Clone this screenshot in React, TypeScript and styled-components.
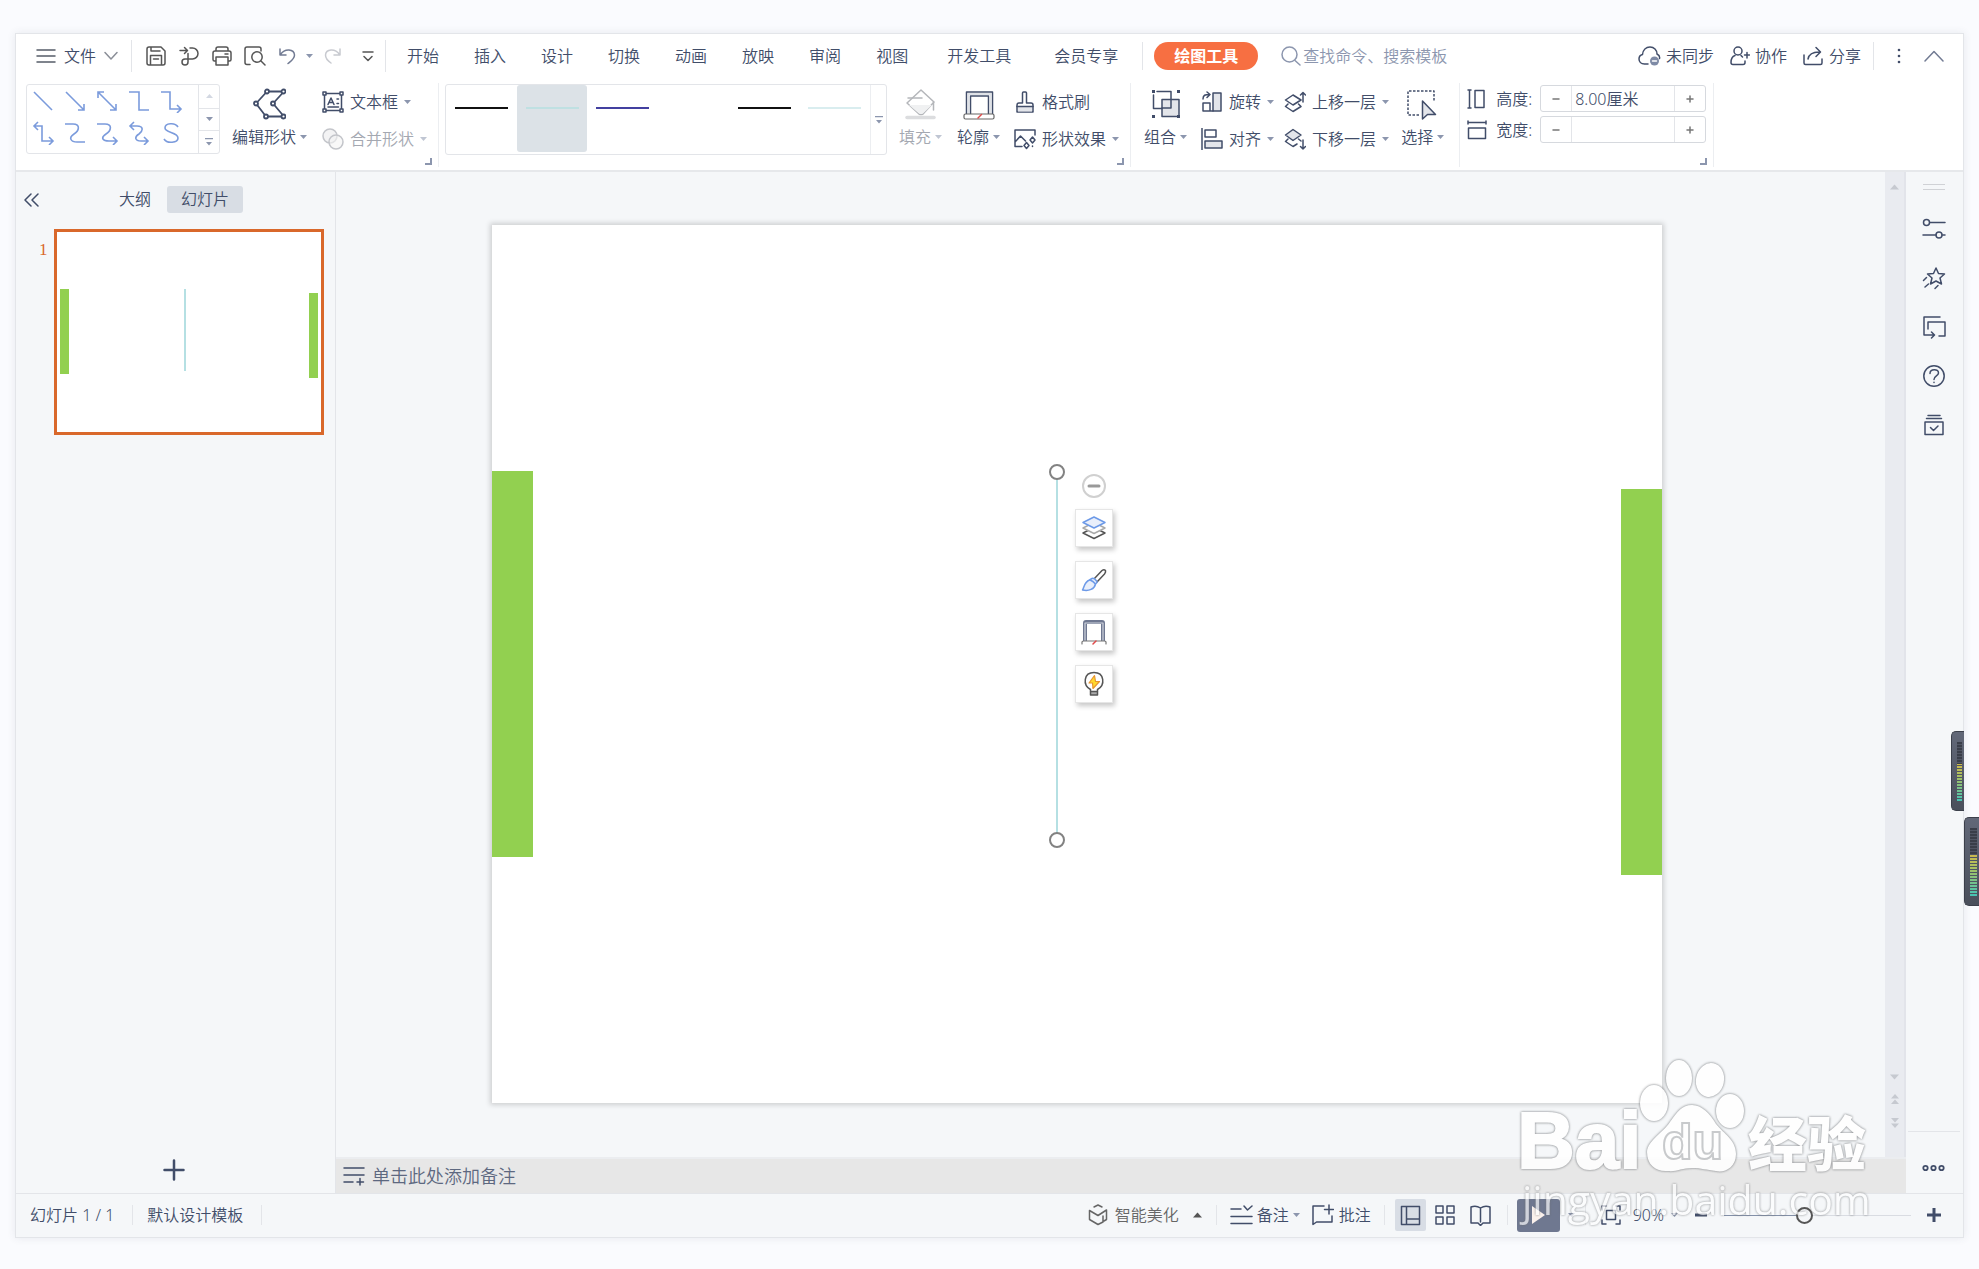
import React from "react";
import styled, { createGlobalStyle, css } from "styled-components";

const ink = "#414d69";
const soft = "#8c96ae";
const line = "#e3e5e9";
const panel = "#f5f7f9";
const green = "#92d050";
const orange = "#d9682b";

const GlobalStyle = createGlobalStyle`
  *, *::before, *::after { box-sizing: border-box; }
  body {
    margin: 0;
    background: #fafbfe;
    color: ${ink};
    font-family: "Noto Sans", "Noto Sans CJK SC", sans-serif;
    font-size: 16px;
    font-weight: 350;
    line-height: 24px;
  }
  button, input { font: inherit; color: inherit; }
  button { background: none; border: 0; padding: 0; cursor: pointer; }
  svg { display: block; flex: none; }
`;

const Page = styled.div`
  display: flex;
  min-height: 100vh;
  padding: 33px 15px 32px;
  overflow: hidden;
  position: relative;
`;

const AppWindow = styled.div`
  flex: 1;
  min-width: 0;
  display: flex;
  flex-direction: column;
  position: relative;
  border: 1px solid ${line};
  background: #fff;
  box-shadow: 0 0 8px rgba(60, 70, 90, 0.1);
`;

/* ---------- menu bar ---------- */

const MenuBar = styled.header`
  display: flex;
  align-items: center;
  height: 45px;
  padding-bottom: 1px;
`;

const FileButton = styled.button`
  display: flex;
  align-items: center;
  gap: 8px;
  padding: 0 13px 0 20px;
`;

const Divider = styled.span<{ $h?: number }>`
  flex: none;
  width: 1px;
  height: ${(p) => p.$h ?? 28}px;
  background: ${line};
`;

const QuickBar = styled.div`
  display: flex;
  padding-left: 7px;
`;

const QuickButton = styled.button<{ $w?: number }>`
  width: ${(p) => p.$w ?? 33}px;
  height: 32px;
  display: flex;
  align-items: center;
  justify-content: center;
`;

const Tabs = styled.nav`
  display: flex;
  align-items: center;
  gap: 1px;
  padding: 0 3px 0 4px;
`;

const Tab = styled.button<{ $wide?: boolean }>`
  height: 28px;
  padding: 0 ${(p) => (p.$wide ? 21 : 17)}px;
  white-space: nowrap;
`;

const ToolTab = styled.button`
  height: 28px;
  margin: 0 23px 0 11px;
  padding: 0 20px;
  border-radius: 14px;
  background: #f76f42;
  color: #fff;
  font-weight: 700;
  white-space: nowrap;
`;

const Search = styled.label`
  display: flex;
  align-items: center;
  gap: 2px;
  flex: 1;
  min-width: 0;
`;

const SearchInput = styled.input`
  flex: 1;
  min-width: 0;
  padding: 0;
  border: 0;
  outline: 0;
  background: none;
  &::placeholder { color: ${soft}; opacity: 1; }
`;

const Account = styled.div`
  display: flex;
  align-items: center;
  gap: 16px;
  padding-right: 19px;
`;

const AccountButton = styled.button`
  display: flex;
  align-items: center;
  gap: 5px;
  white-space: nowrap;
`;

const AccountEnd = styled.div`
  display: flex;
  align-items: center;
  gap: 23px;
  margin-left: -4px;
`;

/* ---------- ribbon ---------- */

const Ribbon = styled.section`
  display: flex;
  height: 93px;
  padding-top: 4px;
  border-bottom: 2px solid #e6e8eb;
`;

const Group = styled.div<{ $left: number; $right: number }>`
  position: relative;
  display: flex;
  align-items: flex-start;
  height: 84px;
  padding: 1px ${(p) => p.$right}px 0 ${(p) => p.$left}px;
  border-right: 1px solid #eceef1;
`;

const Launcher = styled.button`
  position: absolute;
  right: 6px;
  bottom: 2px;
  width: 7px;
  height: 7px;
  border: solid ${soft};
  border-width: 0 2px 2px 0;
`;

const ShapeGallery = styled.div`
  display: flex;
  width: 194px;
  height: 70px;
  border: 1px solid ${line};
  border-radius: 3px;
`;

const ShapeGrid = styled.div`
  flex: 1;
  display: grid;
  grid-template-columns: repeat(5, 32px);
  grid-auto-rows: 32px;
`;

const Cell = styled.button`
  display: grid;
  place-items: center;
`;

const Scroller = styled.div`
  width: 21px;
  display: grid;
  grid-template-rows: repeat(3, 1fr);
  border-left: 1px solid ${line};
  button + button { border-top: 1px solid ${line}; }
`;

const BigButton = styled.button<{ $off?: boolean }>`
  display: flex;
  flex-direction: column;
  align-items: center;
  gap: 5px;
  padding-top: 4px;
  white-space: nowrap;
  ${(p) => p.$off && css`color: #a4a8b1;`}
`;

const BigLabel = styled.span`
  display: flex;
  align-items: center;
  gap: 4px;
`;

const Stack = styled.div`
  display: grid;
  gap: 2px;
`;

const SmallButton = styled.button<{ $off?: boolean }>`
  display: flex;
  align-items: center;
  gap: 6px;
  height: 35px;
  white-space: nowrap;
  ${(p) => p.$off && css`color: #a4a8b1;`}
`;

const Gap = styled.span<{ $w: number }>`
  flex: none;
  width: ${(p) => p.$w}px;
`;

const LineGallery = styled.div`
  display: flex;
  width: 442px;
  height: 71px;
  border: 1px solid ${line};
  border-radius: 3px;
`;

const LineCells = styled.div`
  flex: 1;
  display: grid;
  grid-template-columns: repeat(6, 1fr);
`;

const LineCell = styled.button<{ $on?: boolean }>`
  display: flex;
  justify-content: center;
  padding-top: 22px;
  margin-bottom: 2px;
  border-radius: 3px;
  background: ${(p) => (p.$on ? "#dce2e7" : "transparent")};
`;

const Stroke = styled.span<{ $c: string }>`
  width: 53px;
  height: 2px;
  background: ${(p) => p.$c};
`;

const GalleryMore = styled.button`
  width: 16px;
  display: grid;
  place-items: center;
  border-left: 1px solid #eceef1;
`;

const SizeRows = styled.div`
  display: grid;
  gap: 4px;
  padding-top: 1px;
`;

const SizeRow = styled.div`
  display: grid;
  grid-template-columns: 29px 44px 166px;
  align-items: center;
  height: 27px;
`;

const Spin = styled.div`
  display: grid;
  grid-template-columns: 31px 1fr 31px;
  height: 27px;
  border: 1px solid #d6d9de;
  border-radius: 3px;
  button { display: grid; place-items: center; }
  button:first-child { border-right: 1px solid ${line}; }
  button:last-child { border-left: 1px solid ${line}; }
`;

const SpinInput = styled.input`
  min-width: 0;
  padding: 0 3px;
  border: 0;
  outline: 0;
  background: none;
`;

/* ---------- body ---------- */

const Body = styled.main`
  flex: 1;
  display: grid;
  grid-template-columns: 320px minmax(0, 1fr) 57px;
  background: ${panel};
`;

const SlidePanel = styled.aside`
  display: flex;
  flex-direction: column;
  border-right: 1px solid ${line};
`;

const PanelHead = styled.div`
  display: flex;
  align-items: center;
  gap: 2px;
  padding: 14px 0 0 8px;
  height: 41px;
`;

const PanelTab = styled.button<{ $on?: boolean }>`
  height: 27px;
  padding: 0 14px;
  border-radius: 3px;
  line-height: 27px;
  background: ${(p) => (p.$on ? "#d8dde4" : "transparent")};
`;

const ThumbRow = styled.div`
  display: grid;
  grid-template-columns: 15px 1fr;
  padding: 16px 11px 0 23px;
`;

const ThumbNumber = styled.span`
  padding-top: 9px;
  color: ${orange};
  font-family: "Liberation Serif", serif;
  font-size: 17px;
  font-weight: 400;
`;

const Thumb = styled.button`
  padding: 3px;
  border: 3px solid ${orange};
  background: #fff;
`;

const AddSlide = styled.button`
  margin-top: auto;
  height: 46px;
  padding: 1px 3px 0 0;
  display: grid;
  place-items: center;
`;

const Center = styled.section`
  display: flex;
  flex-direction: column;
`;

const Workspace = styled.div`
  flex: 1;
  display: grid;
  grid-template-columns: minmax(0, 1fr) 21px;
`;

const Stage = styled.div`
  padding: 53px 223px 54px 156px;
`;

const Slide = styled.div<{ $raised?: boolean }>`
  position: relative;
  display: block;
  width: 100%;
  aspect-ratio: 4 / 3;
  background: #fff;
  ${(p) => p.$raised && css`box-shadow: 0 0 5px 2px rgba(0, 0, 0, 0.16);`}
`;

/* Shapes sit on the free slide canvas, in shares of its size. */
const Block = styled.span<{ $side: "left" | "right"; $top: number }>`
  position: absolute;
  ${(p) => p.$side}: 0;
  top: ${(p) => p.$top}%;
  width: 3.5%;
  height: 44%;
  background: ${green};
`;

const Connector = styled.span`
  position: absolute;
  left: 48.2%;
  top: 28.1%;
  width: 2px;
  height: 42%;
  background: #b5e0e3;
`;

const Handle = styled.span<{ $end?: boolean }>`
  position: absolute;
  left: -7px;
  ${(p) => (p.$end ? "bottom" : "top")}: -8px;
  width: 16px;
  height: 16px;
  border: 2px solid #828282;
  border-radius: 50%;
  background: #fff;
`;

const FloatBar = styled.div`
  position: absolute;
  left: 49.8%;
  top: 28.4%;
  display: grid;
  justify-items: center;
  gap: 14px;
`;

const FloatClose = styled.button`
  width: 24px;
  height: 24px;
  display: grid;
  place-items: center;
  margin-bottom: -3px;
  border: 2px solid #d0d0d0;
  border-radius: 50%;
`;

const FloatButton = styled.button`
  width: 38px;
  height: 38px;
  display: grid;
  place-items: center;
  border: 1px solid #e6e6e6;
  background: #fff;
  box-shadow: 2px 3px 5px rgba(0, 0, 0, 0.22);
`;

const ScrollBar = styled.div`
  display: flex;
  flex-direction: column;
  align-items: center;
  gap: 14px;
  padding: 12px 0 29px;
  border-right: 2px solid #e2e4ea;
  background: #e9ebf0;
  button:nth-child(2) { margin-top: auto; }
`;

const Notes = styled.label`
  display: flex;
  align-items: center;
  gap: 7px;
  height: 36px;
  padding: 0 7px;
  border-top: 2px solid #ebedf0;
  background: #e7e7e7;
`;

const NotesInput = styled.input`
  flex: 1;
  padding: 0;
  border: 0;
  outline: 0;
  background: none;
  font-size: 18px;
  &::placeholder { color: #5d6880; opacity: 1; }
`;

const SideBar = styled.aside`
  display: flex;
  flex-direction: column;
  align-items: center;
  padding-right: 2px;
`;

const Grip = styled.span`
  width: 22px;
  height: 6px;
  margin: 12px 0 14px;
  border: solid #d0d2d6;
  border-width: 1px 0;
`;

const SideButton = styled.button`
  width: 44px;
  height: 49px;
  display: grid;
  place-items: center;
`;

const SideMore = styled.button`
  width: 52px;
  height: 62px;
  margin-top: auto;
  padding-top: 12px;
  display: grid;
  place-items: center;
  border-top: 1px solid ${line};
`;

/* ---------- status bar ---------- */

const StatusBar = styled.footer`
  display: flex;
  align-items: center;
  height: 44px;
  border-top: 1px solid ${line};
  background: ${panel};
  white-space: nowrap;
`;

const StatusText = styled.span`
  padding: 0 18px 0 14px;
`;

const StatusTools = styled.div`
  display: flex;
  align-items: center;
  margin-left: auto;
  padding-right: 22px;
`;

const StatusButton = styled.button<{ $gap?: number; $grey?: boolean }>`
  display: flex;
  align-items: center;
  gap: ${(p) => p.$gap ?? 5}px;
  height: 32px;
  ${(p) => p.$grey && css`color: #666;`}
`;

const ViewButton = styled.button<{ $on?: boolean }>`
  width: 31px;
  height: 32px;
  display: grid;
  place-items: center;
  border-radius: 2px;
  background: ${(p) => (p.$on ? "#d8dde5" : "transparent")};
`;

const PlayButton = styled.button`
  width: 43px;
  height: 33px;
  display: grid;
  place-items: center;
  border-radius: 3px;
  background: #6f7890;
`;

const Zoom = styled.input`
  appearance: none;
  width: 187px;
  height: 18px;
  margin: 0 16px;
  background: linear-gradient(90deg, #8390a8 40%, #d9dce2 40%) center / 100% 1px no-repeat;
  &::-webkit-slider-thumb {
    appearance: none;
    width: 17px;
    height: 17px;
    border: 2px solid #555;
    border-radius: 50%;
    background: ${panel};
  }
`;

/* ---------- overlays ---------- */

const Meter = styled.div<{ $edge?: boolean }>`
  position: absolute;
  right: ${(p) => (p.$edge ? 0 : 15)}px;
  top: ${(p) => (p.$edge ? 817 : 731)}px;
  width: ${(p) => (p.$edge ? 15 : 13)}px;
  height: ${(p) => (p.$edge ? 89 : 80)}px;
  padding: 10px 2px 9px 5px;
  border: 1px solid #3c404b;
  border-right: 0;
  border-radius: 5px 0 0 5px;
  background: linear-gradient(#626878, #4a4f5b);
`;

const MeterBar = styled.span`
  display: block;
  height: 100%;
  background:
    repeating-linear-gradient(transparent 0 2px, #505563 2px 3px),
    linear-gradient(#3a3e49 0 38%, #cdb94c 38%, #a5c164 60%, #45c4b4);
`;

const Watermark = styled.div`
  position: absolute;
  right: 83px;
  bottom: -1px;
  pointer-events: none;
  opacity: 0.9;
`;

const MarkArt = styled.svg`
  fill: #fff;
  .soft { filter: drop-shadow(0 0 1px rgba(110, 112, 116, 0.75)) drop-shadow(0 0 1px rgba(110, 112, 116, 0.4)); }
  .faint { opacity: 0.75; }
`;

/* ---------- icons ---------- */

type IconProps = { w?: number; h?: number; c?: string; s?: number; children: React.ReactNode };

const Icon = ({ w = 22, h = 22, c = ink, s = 1.5, children }: IconProps) => (
  <svg
    width={w}
    height={h}
    viewBox={`0 0 ${w} ${h}`}
    fill="none"
    stroke={c}
    strokeWidth={s}
    strokeLinecap="round"
    strokeLinejoin="round"
    aria-hidden="true"
  >
    {children}
  </svg>
);

const Caret = ({ up, c = soft }: { up?: boolean; c?: string }) => (
  <svg width="7" height="6" viewBox="0 0 7 6" aria-hidden="true">
    <path d={up ? "M0 5h7L3.500 1z" : "M0 1h7L3.500 5z"} fill={c} />
  </svg>
);

const WideCaret = ({ up, c = "#c6c9d0" }: { up?: boolean; c?: string }) => (
  <svg width="9" height="6" viewBox="0 0 9 6" aria-hidden="true">
    <path d={up ? "M0 5.500h9L4.500 0.500z" : "M0 0.500h9L4.500 5.500z"} fill={c} />
  </svg>
);

const MoreCaret = () => (
  <svg width="8" height="8" viewBox="0 0 8 8" aria-hidden="true">
    <path d="M0 0h8v1.300H0zM1 4h6L4 7.500z" fill={soft} />
  </svg>
);

const blue = "#7b9bdc";

const shapes = [
  "M1 1L19 19",
  "M1 1L19 19M13 19h6v-6",
  "M1 1L19 19M13 19h6v-6M7 1H1v6",
  "M0 1H10V19H20",
  "M0 1H9V18H20M16 14l4 4-4 4",
  "M1 3H9V18H20M16 14l4 4-4 4M5-1L1 3l4 4",
  "M0 1H8C16 1 14 8 9 11C3 15 6 19 12 19H20",
  "M0 1H8C16 1 14 8 9 11C3 15 6 18 12 18H20M16 14l4 4-4 4",
  "M1 3H8C15 3 14 8 10 11C5 14 6 18 12 18H19M15 14l4 4-4 4M5-1L1 3l4 4",
  "M17 4C14-1 4 0 4 5C4 10 17 9 17 15C17 20 6 21 3 16",
];

const icons = {
  menu: <Icon w={20} h={16} c="#555c68"><path d="M1 2H19M1 8H19M1 14H19" /></Icon>,
  down: <Icon w={14} h={10} c="#8b8f98"><path d="M1 1.500L7 8L13 1.500" /></Icon>,
  save: (
    <Icon w={20} h={20} c="#555">
      <path d="M1 3Q1 1 3 1H15L19 5V17Q19 19 17 19H3Q1 19 1 17ZM5 1.500V5H14M4.500 19V9.500H15.500V19M7.500 13H12.500" />
    </Icon>
  ),
  exportPdf: (
    <Icon w={20} h={20} c="#555">
      <path d="M1 4.500H8M5.500 1.500L8.500 4.500L5.500 7.500M11 2H13.500A5.500 5.500 0 0 1 13.500 13H6A3 3 0 1 0 9 16V7.500" />
    </Icon>
  ),
  print: (
    <Icon w={20} h={20} c="#555">
      <path d="M4 5V3Q4 1 6 1H14Q16 1 16 3V5M4 15H2.500Q1 15 1 13.500V7Q1 5 3 5H17Q19 5 19 7V13.500Q19 15 17.500 15H16M4 11H16V19H4ZM13 8H16" />
    </Icon>
  ),
  preview: (
    <Icon w={22} h={20} c="#555">
      <path d="M6 18.500H3Q1 18.500 1 16.500V3Q1 1 3 1H15Q17 1 17 3V5" />
      <circle cx="13" cy="11" r="5.200" /><path d="M17 15L21 19" />
    </Icon>
  ),
  undo: <Icon w={17} h={18} c="#727b93"><path d="M1 2V8H7M1.500 7.500C6 1 15 2 15.500 8C15.500 12 12 14 9 16.500" /></Icon>,
  redo: <Icon w={17} h={18} c="#c8cad0"><path d="M16 2V8H10M15.500 7.500C11 1 2 2 1.500 8C1.500 12 4 14 7 16" /></Icon>,
  more: <Icon w={12} h={11} c="#555"><path d="M1 1H11M2 5.500L6 9.500L10 5.500" /></Icon>,
  search: <Icon w={20} h={20} c={soft}><circle cx="8.500" cy="8.500" r="7.500" /><path d="M14 14.500L19 19" /></Icon>,
  cloud: (
    <Icon w={23} h={20}>
      <path d="M10 18H6.500C3 18 1 15.500 1 13C1 10.500 2.500 9 4.500 8.500C5 4 8 1 12 1C16 1 19 4 19 8C21 9 22 10.500 21.500 12.500" />
      <circle cx="16.500" cy="15" r="4.500" fill="#7e8aa5" stroke="none" /><path d="M14.500 15H18.500" stroke="#fff" />
    </Icon>
  ),
  people: (
    <Icon w={20} h={20}>
      <circle cx="8" cy="5" r="4" /><path d="M5 9.500C2 10.500 1 13 1 16.500Q1 18.500 3 18.500H13Q15 18.500 15 16.500V15M14.500 9H19.500M17 6.500V12M11 9.500L12.500 11" />
    </Icon>
  ),
  share: (
    <Icon w={21} h={20}>
      <path d="M1 9V17Q1 18.500 2.500 18.500H17.500Q19 18.500 19 17V13M5 13C6 8 9 6 16 6M13 1.500L17.500 6L13 10.500" />
    </Icon>
  ),
  dots: <Icon w={4} h={16} s={0}><g fill={ink} stroke="none"><circle cx="2" cy="2" r="1.300" /><circle cx="2" cy="8" r="1.300" /><circle cx="2" cy="14" r="1.300" /></g></Icon>,
  up: <Icon w={20} h={12} c="#727b93"><path d="M1 11L10 1.500L19 11" /></Icon>,
  editShape: (
    <Icon w={33} h={32} s={1.8}>
      <path d="M14 3.500H31L20 15.500L31 28.500H13L3 15.500Z" />
      <g fill="#fff"><circle cx="14" cy="3.500" r="2" /><circle cx="30.500" cy="3.500" r="2" /><circle cx="20" cy="15.500" r="2" /><circle cx="30.500" cy="28.500" r="2" /><circle cx="13" cy="28.500" r="2" /><circle cx="3" cy="15.500" r="2" /></g>
    </Icon>
  ),
  textBox: (
    <Icon>
      <path d="M2.500 2.500H19.500V19.500H2.500Z" />
      <g fill="#fff"><rect x="1" y="1" width="3" height="3" /><rect x="18" y="1" width="3" height="3" /><rect x="1" y="18" width="3" height="3" /><rect x="18" y="18" width="3" height="3" /></g>
      <path d="M6 13.500L9 7L12 13.500M7 11.500H11M15 8H16.500M15 12.500H16.500M6 16H16.500" />
    </Icon>
  ),
  merge: (
    <Icon c="#c3c5ca">
      <circle cx="8" cy="8" r="7" fill="#f3f3f4" /><circle cx="14" cy="14" r="7" fill="#f3f3f4" fillOpacity=".6" />
    </Icon>
  ),
  fill: (
    <Icon w={31} h={32} c="#b4b6ba">
      <path d="M16 2L29 14L18 26Q16 27 14 26L2 15Z" />
      <path d="M4 17H27L18 25.500Q16 26.500 14 25.500Z" fill="#f0f1f2" stroke="none" />
      <path d="M3 10H17M28.500 14V22" /><path d="M2 29.500H29" stroke="#dcdddf" strokeWidth="3.500" />
    </Icon>
  ),
  outline: (
    <Icon w={32} h={32}>
      <path d="M3.500 26V4H29.500V26M7.500 26V8H25.500V26" />
      <path d="M5.500 26V6H27.500V26" stroke="#dfe2e7" strokeWidth="2" />
      <rect x="1" y="26" width="30" height="5" rx="1.500" fill="#fff" stroke="#666" strokeWidth="1.200" />
      <path d="M15 30L18.500 26.500" stroke="#e04a4a" />
    </Icon>
  ),
  brush: (
    <Icon><path d="M3 21V14Q3 12 5 12H8.500V2Q8.500 1 9.500 1H11.500Q12.500 1 12.500 2V12H17Q19 12 19 14V21Z" /><path d="M4 16H18V20.500H4Z" fill="#e3e5ea" stroke="none" /><path d="M3 15.500H19" /></Icon>
  ),
  effect: (
    <Icon>
      <path d="M8 18.500H1V2H21V7M1.500 13.500L6.500 8L11.500 13" />
      <path d="M18.500 9L21 12L18.500 15L16 12ZM12.500 14.500L15 17.500L12.500 20.500L10 17.500Z" /><path d="M18.500 18V18.500" />
    </Icon>
  ),
  group: (
    <Icon w={30} h={32}>
      <path d="M11 11.500H28V28.500H11Z" fill="#e3e5ea" /><path d="M20 11V20H11M2.500 7V20.500H11M6 3.500H20V11" />
      <g fill={ink} stroke="none"><rect x="1" y="2" width="3" height="3" /><rect x="26" y="2" width="3" height="3" /><rect x="1" y="27" width="3" height="3" /><rect x="26" y="27" width="3" height="3" /></g>
    </Icon>
  ),
  rotate: (
    <Icon><path d="M12 2H20V20H12Z" fill="#e3e5ea" /><path d="M12 20H2V12H9V20M2 8C2 4 4 3.500 8.500 3.500M6 1L9 3.500L6 6.500" /></Icon>
  ),
  align: (
    <Icon><path d="M1 0V22M4 2H15V9H4Z" /><path d="M4 13H21V20H4Z" fill="#e3e5ea" /></Icon>
  ),
  forward: (
    <Icon w={22}><path d="M9 4L17 9L9 14L1.500 9ZM4 13L1.500 15.500L9 20.500L17 15.500L14.500 13M19 11V1.500M16.500 4L19 1.500L21.500 4" /></Icon>
  ),
  backward: (
    <Icon w={22}><path d="M9 1.500L17 7L9 12.500L1.500 7Z" fill="#e3e5ea" /><path d="M4 11L1.500 13.500L9 18.500L13 16M14.500 11L17 13M19 12V21M16.500 18.500L19 21L21.500 18.500" /></Icon>
  ),
  select: (
    <Icon w={33} h={32}>
      <path d="M13 27H2V3H28V14" strokeDasharray="2.500 1.500" strokeLinecap="butt" />
      <path d="M16.500 13V31L21.500 26.500H29.500Z" fill="#e3e5ea" />
    </Icon>
  ),
  height: <Icon w={20} h={20}><path d="M1 1H4M1 19H4M2.500 1V19M8 1.500H17V18.500H8Z" /></Icon>,
  width: <Icon w={20} h={20}><path d="M1 1V4M19 1V4M1 2.500H19M1.500 8H18.500V18.500H1.500Z" /></Icon>,
  minus: <Icon w={8} h={8} c="#777"><path d="M1 4H7" /></Icon>,
  plus: <Icon w={8} h={8} c="#777"><path d="M1 4H7M4 1V7" /></Icon>,
  collapse: <Icon w={15} h={14}><path d="M7 1L1 7L7 13M14 1L8 7L14 13" /></Icon>,
  bigPlus: <Icon w={22} h={22} s={2.5}><path d="M1.500 11H20.500M11 1.500V20.500" /></Icon>,
  notes: <Icon w={22} h={20}><path d="M1 2H21M1 9H21M1 16H10M17 12.500V19M14 16H20.500" /></Icon>,
  layers: (
    <Icon w={26} h={26}>
      <path d="M2 18L13 12.500L24 18L13 23.500Z" stroke="#555" fill="#fff" /><path d="M2 13L13 7.500L24 13L13 18.500Z" stroke="#aaa" fill="#fff" /><path d="M2 7.500L13 2L24 7.500L13 13Z" stroke="#6d9ae8" fill="#e9effb" />
    </Icon>
  ),
  paint: (
    <Icon w={26} h={26}>
      <path d="M13 12L21 3.500Q23 2 24.500 3.500Q25 5 23.500 7L16 15" stroke="#555" />
      <path d="M11 11.500Q13 10.500 16 14.500Q16 16 14.500 17C13.500 22 8 24.500 1.500 23C3 21 3 15 8.500 13Z" stroke="#6d9ae8" fill="#e9effb" /><path d="M9 13Q12 14 14.500 17" stroke="#6d9ae8" />
    </Icon>
  ),
  outlineSmall: (
    <Icon w={26} h={26}>
      <path d="M4 22V4Q4 3 5 3H21Q22 3 22 4V22" stroke="#6f7891" strokeWidth="4" strokeLinecap="butt" /><path d="M4 22V4H22V22" stroke="#cfd4de" strokeWidth="1.200" strokeLinecap="butt" />
      <path d="M1 25V23Q1 22 2.500 22H23.500Q25 22 25 23V25" stroke="#777" strokeWidth="1.200" /><path d="M12 25L15 22" stroke="#e04a4a" />
    </Icon>
  ),
  bulb: (
    <Icon w={26} h={26} c="#555">
      <path d="M9.500 20V18.500C1.500 14 2.500 1.500 13 1.500C23.500 1.500 24.500 14 16.500 18.500V20" fill="#fff" />
      <path d="M9.500 20.500H16.500V24H9.500Z" fill="#aaa" /><path d="M13.500 4.500L8 12H11.500L12 17.500L18.500 10.500H14.500Z" fill="#ffd92e" stroke="#e8952f" strokeWidth="1.200" />
    </Icon>
  ),
  settings: <Icon w={24} h={22}><circle cx="4.500" cy="4.500" r="3" /><path d="M8 4.500H23M1 17H14" /><circle cx="17" cy="17" r="3" /><path d="M20.500 17H23" /></Icon>,
  star: (
    <Icon w={24} h={24}>
      <path d="M14 2L16.500 7.500L22.500 8L18 12L19.500 18L14 15L8.500 18L10 12L5.500 8L11.500 7.500Z" />
      <path d="M1.500 14.500L4.500 11.500M3 21L6.500 18M13 22.500L16 19.500" />
    </Icon>
  ),
  windows: <Icon w={24} h={24}><path d="M18 2H2V20H12M9.500 17L12.500 20L9.500 23M6 14V7H23V21H17" /></Icon>,
  help: (
    <Icon w={24} h={24}><circle cx="12" cy="12" r="10.200" /><path d="M8 9.500C8 4.500 16.500 4.500 16.500 9C16.500 12 12 12 12 15.500M12 18.300V18.600" /></Icon>
  ),
  archive: <Icon w={22} h={22}><path d="M5 1.500H17M3.500 4.500H18.500M2 8H20V20.500H2ZM7.500 13.500L10.500 16.500L15 12" /></Icon>,
  ellipsis: <Icon w={23} h={8} s={1.8}><circle cx="3.500" cy="4" r="2.200" /><circle cx="11.500" cy="4" r="2.200" /><circle cx="19.500" cy="4" r="2.200" /></Icon>,
  cube: <Icon w={20} h={22} c="#666"><path d="M6 3L10 1L14 3M1.500 6.500L10 11.500L18.500 6V15.500L16 17M1.500 6.500V15.500L10 20.500L15 18V12" /></Icon>,
  remark: <Icon w={23} h={20}><path d="M1 4H11M1 11.500H22M1 18.500H22M14 1L17.500 5L22 1" /></Icon>,
  comment: <Icon w={22} h={22}><path d="M12 2H1V20.500L4.500 18H20V12M17 1V10M12.500 5.500H21.500" /></Icon>,
  normal: <Icon w={21} h={21}><path d="M1.500 1.500H19.500V19.500H1.500ZM6.500 2V19M6.500 14H19" /></Icon>,
  sorter: <Icon w={20} h={20}><path d="M1 1H8V8H1ZM12 1H19V8H12ZM1 12H8V19H1ZM12 12H19V19H12Z" /></Icon>,
  book: <Icon w={21} h={21}><path d="M10.500 3Q6 0 1 2V18H8L10.500 20.500L13 18H20V2Q15 0 10.500 3V17" /></Icon>,
  play: <svg width="13" height="18" viewBox="0 0 13 18" aria-hidden="true"><path d="M0 0L13 9L0 18z" fill="#fbf1ec" /></svg>,
  fit: <Icon w={20} h={20}><path d="M1 5V1H5M15 1H19V5M19 15V19H15M5 19H1V15M5.500 5.500H14.500V14.500H5.500Z" /></Icon>,
  zoomOut: <Icon w={14} h={14} s={3}><path d="M1 7H13" strokeLinecap="butt" /></Icon>,
  zoomIn: <Icon w={14} h={14} s={3}><path d="M0 7H14M7 0V14" strokeLinecap="butt" /></Icon>,
};

/* ---------- small pieces ---------- */

const Big = ({ icon, label, off }: { icon: React.ReactNode; label: string; off?: boolean }) => (
  <BigButton $off={off}>
    {icon}
    <BigLabel>{label}<Caret c={off ? "#c0c6d3" : soft} /></BigLabel>
  </BigButton>
);

const Small = ({ icon, label, off, plain }: { icon: React.ReactNode; label: string; off?: boolean; plain?: boolean }) => (
  <SmallButton $off={off}>
    {icon}
    <span>{label}</span>
    {!plain && <Caret c={off ? "#c0c6d3" : soft} />}
  </SmallButton>
);

const SizeField = ({ id, icon, label, value }: { id: string; icon: React.ReactNode; label: string; value: string }) => (
  <SizeRow>
    {icon}
    <label htmlFor={id}>{label}</label>
    <Spin>
      <button aria-label="减小">{icons.minus}</button>
      <SpinInput id={id} defaultValue={value} />
      <button aria-label="增大">{icons.plus}</button>
    </Spin>
  </SizeRow>
);

const DoubleCaret = ({ up }: { up?: boolean }) => (
  <svg width="8" height="10" viewBox="0 0 8 10" fill="#c6c9d0" aria-hidden="true">
    <path d={up ? "M0 4.500h8L4 0zM0 10h8L4 5.500z" : "M0 0h8L4 4.500zM0 5.500h8L4 10z"} />
  </svg>
);

const Artwork = ({ children }: { children?: React.ReactNode }) => (
  <>
    <Block $side="left" $top={28} />
    <Block $side="right" $top={30.1} />
    <Connector>{children}</Connector>
  </>
);

const Logo = () => (
  <MarkArt width="400" height="190" viewBox="0 0 400 190">
    <g className="soft">
      <ellipse cx="174" cy="55" rx="14" ry="18" />
      <ellipse cx="199" cy="30" rx="13" ry="18" />
      <ellipse cx="230" cy="32" rx="14" ry="17" transform="rotate(12 230 32)" />
      <ellipse cx="250" cy="63" rx="14" ry="17" />
      <path d="M212 57C222 57 230 66 236 76C244 86 256 92 256 106C256 120 244 125 236 123C226 122 222 120 212 120C202 120 196 124 188 123C176 124 167 117 167 104C168 92 182 86 190 74C197 64 202 57 212 57Z" />
      <text x="37" y="120" fontSize="80" fontWeight="700" fontFamily="'Liberation Sans', Arial, sans-serif" stroke="#fff" strokeWidth="2">Bai</text>
      <text x="268" y="118" fontSize="59" fontWeight="900" fontFamily="'Noto Sans CJK SC', sans-serif">经验</text>
    </g>
    <text
      x="182" y="111" fontSize="50" fontWeight="700" fontFamily="'Liberation Sans', Arial, sans-serif"
      stroke="#c4c6c8" strokeWidth="2"
    >du</text>
    <g className="faint">
      <text className="soft" x="42" y="167" fontSize="41" fontWeight="400" fontFamily="'Open Sans', sans-serif">jingyan.baidu.com</text>
    </g>
  </MarkArt>
);

const tabs = ["开始", "插入", "设计", "切换", "动画", "放映", "审阅", "视图", "开发工具", "会员专享"];
const strokes = ["#111", "#bfe0e2", "#4340a0", "transparent", "#111", "#d9edef"];

export default function App() {
  return (
    <Page>
      <GlobalStyle />
      <AppWindow>
        <MenuBar>
          <FileButton>{icons.menu}<span>文件</span>{icons.down}</FileButton>
          <Divider $h={32} />
          <QuickBar>
            <QuickButton aria-label="保存">{icons.save}</QuickButton>
            <QuickButton aria-label="输出">{icons.exportPdf}</QuickButton>
            <QuickButton aria-label="打印">{icons.print}</QuickButton>
            <QuickButton aria-label="打印预览">{icons.preview}</QuickButton>
            <QuickButton aria-label="撤销">{icons.undo}</QuickButton>
            <QuickButton $w={10} aria-label="撤销列表"><Caret /></QuickButton>
            <QuickButton $w={36} aria-label="恢复">{icons.redo}</QuickButton>
            <QuickButton $w={35} aria-label="更多">{icons.more}</QuickButton>
          </QuickBar>
          <Divider $h={32} />
          <Tabs>
            {tabs.map((t) => <Tab key={t} $wide={t.length > 2}>{t}</Tab>)}
          </Tabs>
          <Divider />
          <ToolTab>绘图工具</ToolTab>
          <Search>
            {icons.search}
            <SearchInput placeholder="查找命令、搜索模板" aria-label="搜索" />
          </Search>
          <Account>
            <AccountButton>{icons.cloud}未同步</AccountButton>
            <AccountButton>{icons.people}协作</AccountButton>
            <AccountButton>{icons.share}分享</AccountButton>
            <AccountEnd>
              <Divider />
              <button aria-label="更多选项">{icons.dots}</button>
              <button aria-label="收起功能区">{icons.up}</button>
            </AccountEnd>
          </Account>
        </MenuBar>

        <Ribbon>
          <Group $left={10} $right={11}>
            <ShapeGallery>
              <ShapeGrid>
                {shapes.map((d, i) => (
                  <Cell key={i} aria-label={`线条 ${i + 1}`}>
                    <svg width="24" height="24" viewBox="-2 -2 24 24" fill="none" stroke={blue} strokeWidth="1.600" aria-hidden="true">
                      <path d={d} />
                    </svg>
                  </Cell>
                ))}
              </ShapeGrid>
              <Scroller>
                <Cell aria-label="上一行"><Caret up c="#d3d8e2" /></Cell>
                <Cell aria-label="下一行"><Caret /></Cell>
                <Cell aria-label="全部"><MoreCaret /></Cell>
              </Scroller>
            </ShapeGallery>
            <Gap $w={12} />
            <Big icon={icons.editShape} label="编辑形状" />
            <Gap $w={15} />
            <Stack>
              <Small icon={icons.textBox} label="文本框" />
              <Small icon={icons.merge} label="合并形状" off />
            </Stack>
            <Launcher aria-label="形状设置" />
          </Group>

          <Group $left={6} $right={11}>
            <LineGallery>
              <LineCells>
                {strokes.map((c, i) => (
                  <LineCell key={i} $on={i === 1} aria-label={`样式 ${i + 1}`}><Stroke $c={c} /></LineCell>
                ))}
              </LineCells>
              <GalleryMore aria-label="全部样式"><MoreCaret /></GalleryMore>
            </LineGallery>
            <Gap $w={12} />
            <Big icon={icons.fill} label="填充" off />
            <Gap $w={15} />
            <Big icon={icons.outline} label="轮廓" />
            <Gap $w={14} />
            <Stack>
              <Small icon={icons.brush} label="格式刷" plain />
              <Small icon={icons.effect} label="形状效果" />
            </Stack>
            <Launcher aria-label="样式设置" />
          </Group>

          <Group $left={13} $right={15}>
            <Big icon={icons.group} label="组合" />
            <Gap $w={14} />
            <Stack>
              <Small icon={icons.rotate} label="旋转" />
              <Small icon={icons.align} label="对齐" />
            </Stack>
            <Gap $w={10} />
            <Stack>
              <Small icon={icons.forward} label="上移一层" />
              <Small icon={icons.backward} label="下移一层" />
            </Stack>
            <Gap $w={12} />
            <Big icon={icons.select} label="选择" />
          </Group>

          <Group $left={7} $right={7}>
            <SizeRows>
              <SizeField id="shape-height" icon={icons.height} label="高度:" value="8.00厘米" />
              <SizeField id="shape-width" icon={icons.width} label="宽度:" value="" />
            </SizeRows>
            <Launcher aria-label="大小设置" />
          </Group>
        </Ribbon>

        <Body>
          <SlidePanel>
            <PanelHead>
              <button aria-label="收起窗格">{icons.collapse}</button>
              <Gap $w={62} />
              <PanelTab>大纲</PanelTab>
              <PanelTab $on>幻灯片</PanelTab>
            </PanelHead>
            <ThumbRow>
              <ThumbNumber>1</ThumbNumber>
              <Thumb aria-label="第 1 张幻灯片">
                <Slide as="span"><Artwork /></Slide>
              </Thumb>
            </ThumbRow>
            <AddSlide aria-label="新建幻灯片">{icons.bigPlus}</AddSlide>
          </SlidePanel>

          <Center>
            <Workspace>
              <Stage>
                <Slide $raised>
                  <Artwork><Handle /><Handle $end /></Artwork>
                  <FloatBar>
                    <FloatClose aria-label="收起"><Icon w={14} h={4} c="#999" s={3}><path d="M2 2H12" /></Icon></FloatClose>
                    <FloatButton aria-label="叠放">{icons.layers}</FloatButton>
                    <FloatButton aria-label="画笔">{icons.paint}</FloatButton>
                    <FloatButton aria-label="边框">{icons.outlineSmall}</FloatButton>
                    <FloatButton aria-label="建议">{icons.bulb}</FloatButton>
                  </FloatBar>
                </Slide>
              </Stage>
              <ScrollBar>
                <button aria-label="向上滚动"><WideCaret up /></button>
                <button aria-label="向下滚动"><WideCaret /></button>
                <button aria-label="上一张"><DoubleCaret up /></button>
                <button aria-label="下一张"><DoubleCaret /></button>
              </ScrollBar>
            </Workspace>
            <Notes>
              {icons.notes}
              <NotesInput placeholder="单击此处添加备注" aria-label="备注" />
            </Notes>
          </Center>

          <SideBar>
            <Grip />
            <SideButton aria-label="属性">{icons.settings}</SideButton>
            <SideButton aria-label="动画">{icons.star}</SideButton>
            <SideButton aria-label="切换">{icons.windows}</SideButton>
            <SideButton aria-label="帮助">{icons.help}</SideButton>
            <SideButton aria-label="资源">{icons.archive}</SideButton>
            <SideMore aria-label="更多">{icons.ellipsis}</SideMore>
          </SideBar>
        </Body>

        <StatusBar>
          <StatusText>幻灯片 1 / 1</StatusText>
          <Divider $h={20} />
          <StatusText>默认设计模板</StatusText>
          <Divider $h={20} />
          <StatusTools>
            <StatusButton $grey $gap={7}>{icons.cube}智能美化<Gap $w={0} /><WideCaret up c="#555" /></StatusButton>
            <Gap $w={14} />
            <Divider $h={20} />
            <Gap $w={13} />
            <StatusButton $gap={4}>{icons.remark}备注<Caret /></StatusButton>
            <Gap $w={12} />
            <StatusButton>{icons.comment}批注</StatusButton>
            <Gap $w={13} />
            <Divider $h={20} />
            <Gap $w={10} />
            <ViewButton $on aria-label="普通视图">{icons.normal}</ViewButton>
            <Gap $w={4} />
            <ViewButton aria-label="浏览视图">{icons.sorter}</ViewButton>
            <Gap $w={4} />
            <ViewButton aria-label="阅读视图">{icons.book}</ViewButton>
            <Gap $w={11} />
            <Divider $h={20} />
            <Gap $w={9} />
            <PlayButton aria-label="放映">{icons.play}</PlayButton>
            <Gap $w={8} />
            <button aria-label="放映选项"><Caret /></button>
            <Gap $w={10} />
            <Divider $h={20} />
            <Gap $w={15} />
            <StatusButton aria-label="适应窗口">{icons.fit}</StatusButton>
            <Gap $w={12} />
            <StatusButton $gap={7}>90%<Caret /></StatusButton>
            <Gap $w={16} />
            <button aria-label="缩小">{icons.zoomOut}</button>
            <Zoom type="range" min={10} max={200} defaultValue={90} aria-label="缩放" />
            <button aria-label="放大">{icons.zoomIn}</button>
          </StatusTools>
        </StatusBar>

        <Watermark><Logo /></Watermark>
      </AppWindow>
      <Meter><MeterBar /></Meter>
      <Meter $edge><MeterBar /></Meter>
    </Page>
  );
}
